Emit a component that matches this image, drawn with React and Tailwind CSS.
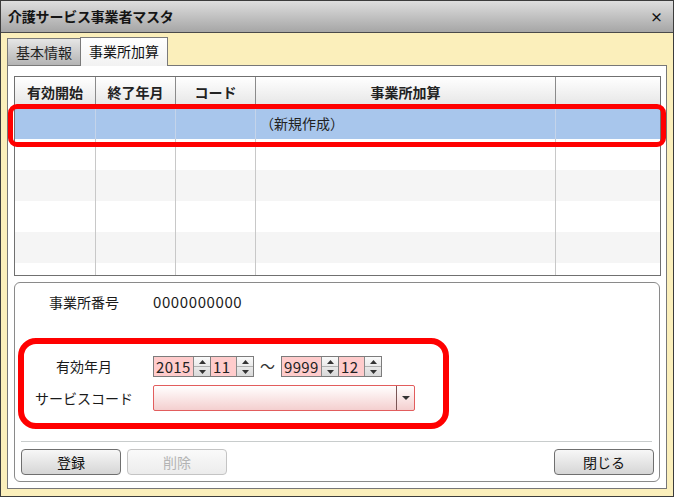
import React from 'react';

const JP = { fontFamily: '"Noto Sans CJK JP", "Noto Sans", sans-serif' };

function SpinButton() {
    return (
        <div className="w-[17px] h-full flex flex-col border-l border-[#8a8a8a] bg-gradient-to-b from-[#fafafa] to-[#d9d9d9]">
            <div className="flex-1 flex items-center justify-center border-b border-[#b0b0b0]">
                <svg width="7" height="4" viewBox="0 0 7 4"><path d="M0 4 L3.5 0 L7 4 Z" fill="#333" /></svg>
            </div>
            <div className="flex-1 flex items-center justify-center">
                <svg width="7" height="4" viewBox="0 0 7 4"><path d="M0 0 L3.5 4 L7 0 Z" fill="#333" /></svg>
            </div>
        </div>
    );
}

function NumBox({ value, w }) {
    return (
        <div className="flex h-[21px] border border-[#7c7c7c]">
            <div className={`${w} bg-[#ffcccc] flex items-center pl-[2px] text-[15px] leading-none text-[#222] tracking-[0.3px]`}>{value}</div>
            <SpinButton />
        </div>
    );
}

function YearMonth({ year, month }) {
    return (
        <div className="flex">
            <NumBox value={year} w="w-[39px]" />
            <div className="-ml-px"><NumBox value={month} w="w-[25px]" /></div>
        </div>
    );
}

const cols = [
    { label: '有効開始', w: 'w-[81px]' },
    { label: '終了年月', w: 'w-[80px]' },
    { label: 'コード', w: 'w-[80px]' },
    { label: '事業所加算', w: 'w-[300px]' },
    { label: '', w: 'w-[104px]' },
];

const rows = ['bg-white', 'bg-[#f5f5f5]', 'bg-white', 'bg-[#f5f5f5]', 'bg-white'];

export default function App() {
    return (
        <div className="relative w-[674px] h-[497px] border border-[#3c3c3c] bg-[#fbefbb] flex flex-col overflow-hidden text-[#1a1a1a]" style={JP}>
            {/* Title bar */}
            <div className="h-[32px] shrink-0 border-b border-[#4a4a4a] bg-gradient-to-b from-[#dedede] to-[#a6a6a6] flex items-center justify-between pl-[7px] pr-[10px]">
                <span className="text-[14px] font-bold tracking-[-0.2px] text-[#151515]">介護サービス事業者マスタ</span>
                <span className="text-[13px] font-bold leading-none text-[#111]">×</span>
            </div>

            {/* Body */}
            <div className="flex-1 pl-[6px] pt-[5px]">
                {/* Tabs */}
                <div className="flex h-[28px] items-end relative z-10 -mb-px">
                    <div className="h-[28px] w-[74px] border border-[#7a7a7a] bg-gradient-to-b from-[#e6e6e6] to-[#b4b4b4] flex items-center justify-center text-[14px] text-[#222]">
                        基本情報
                    </div>
                    <div className="h-[29px] w-[88px] -ml-px border border-b-0 border-[#7a7a7a] bg-gradient-to-b from-[#ffffff] to-[#f2f2f2] flex items-center justify-center pb-px text-[14px] text-[#111]">
                        事業所加算
                    </div>
                </div>

                {/* Content panel */}
                <div className="w-[660px] h-[424px] border border-[#777] bg-white pl-[6px] pt-[10px] flex flex-col gap-[6px]">
                    {/* Grid */}
                    <div className="w-[647px] h-[200px] border border-[#707070] overflow-hidden flex flex-col">
                        <div className="flex h-[31px] shrink-0 bg-gradient-to-b from-[#ffffff] to-[#e4e4e4]">
                            {cols.map((c, i) => (
                                <div key={i} className={`${c.w} shrink-0 flex items-center justify-center text-[14px] font-bold text-[#222] ${i < 4 ? 'border-r border-[#8a8a8a]' : ''}`}>
                                    {c.label}
                                </div>
                            ))}
                        </div>
                        <div className="flex h-[31px] shrink-0 bg-[#a8c6ec]">
                            {cols.map((c, i) => (
                                <div key={i} className={`${c.w} shrink-0 flex items-center text-[14px] text-[#222] ${i < 4 ? 'border-r border-[#c4d4ea]' : ''} ${i === 3 ? 'pl-[4px]' : ''}`}>
                                    {i === 3 ? '（新規作成）' : ''}
                                </div>
                            ))}
                        </div>
                        {rows.map((bg, r) => (
                            <div key={r} className={`flex h-[31px] shrink-0 ${bg}`}>
                                {cols.map((c, i) => (
                                    <div key={i} className={`${c.w} shrink-0 ${i < 4 ? 'border-r border-[#c8c8c8]' : ''}`} />
                                ))}
                            </div>
                        ))}
                    </div>

                    {/* Detail panel */}
                    <div className="w-[646px] h-[200px] border border-[#8a8a8a] rounded-[6px] flex flex-col pt-[9px]">
                        <div className="flex h-[20px] items-center">
                            <div className="w-[138px] text-center text-[14px]">事業所番号</div>
                            <div className="text-[15px] tracking-[0.6px]">0000000000</div>
                        </div>
                        <div className="flex h-[21px] items-center mt-[44px]">
                            <div className="w-[138px] text-center text-[14px]">有効年月</div>
                            <YearMonth year="2015" month="11" />
                            <span className="w-[27px] text-center text-[15px] text-[#333]">～</span>
                            <YearMonth year="9999" month="12" />
                        </div>
                        <div className="flex h-[26px] items-center mt-[8px]">
                            <div className="w-[138px] text-center text-[14px]">サービスコード</div>
                            <div className="w-[262px] h-[26px] border border-[#e25d5d] rounded-[2px] bg-gradient-to-b from-[#ffffff] to-[#f4cfcf] flex justify-end">
                                <div className="w-[18px] h-full border-l border-[#7a5555] flex items-center justify-center">
                                    <svg width="8" height="4" viewBox="0 0 8 4"><path d="M0 0 L8 0 L4 4 Z" fill="#333" /></svg>
                                </div>
                            </div>
                        </div>
                        <div className="mt-[30px] ml-[6px] mr-[7px] h-px bg-[#c8cccc]" />
                        <div className="mt-[7px] flex justify-between pl-[6px] pr-[5px]">
                            <div className="flex gap-[6px]">
                                <button className="w-[100px] h-[26px] rounded-[4px] border border-[#6f6f6f] bg-gradient-to-b from-[#f7f7f7] to-[#d6d6d6] text-[14px] text-[#111]">登録</button>
                                <button className="w-[100px] h-[26px] rounded-[4px] border border-[#c4c4c4] bg-gradient-to-b from-[#fafafa] to-[#ececec] text-[14px] text-[#b4b4b4]">削除</button>
                            </div>
                            <button className="w-[100px] h-[26px] rounded-[4px] border border-[#6f6f6f] bg-gradient-to-b from-[#f7f7f7] to-[#d6d6d6] text-[14px] text-[#111]">閉じる</button>
                        </div>
                    </div>
                </div>
            </div>

            {/* Annotation boxes */}
            <div className="absolute left-[7px] top-[103px] w-[658px] h-[43px] border-[5px] border-[#ff0000] rounded-[9px] pointer-events-none" />
            <div className="absolute left-[17px] top-[337px] w-[431px] h-[91px] border-[6px] border-[#ff0000] rounded-[18px] pointer-events-none" />
        </div>
    );
}
